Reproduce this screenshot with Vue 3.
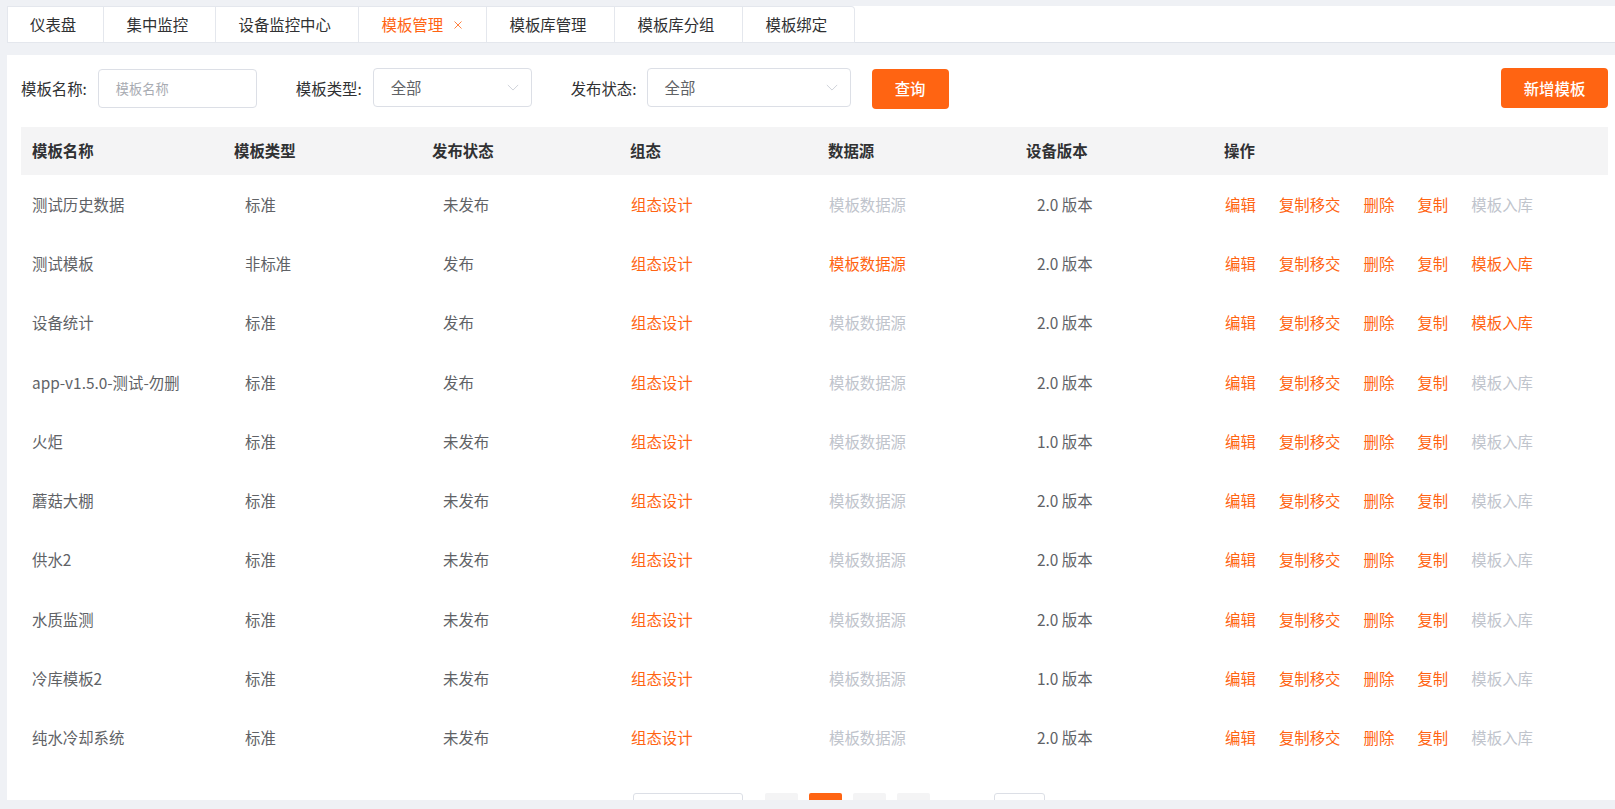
<template>
  <div class="page">
    <div class="tabs">
      <div
        v-for="tab in tabs"
        :key="tab.label"
        class="tab"
        :class="{ active: tab.active }"
        :style="{ width: tab.width + 'px' }"
      >
        <span>{{ tab.label }}</span>
        <svg v-if="tab.active" class="tab-close" viewBox="0 0 10 10" width="10" height="10">
          <path d="M1.5 1.5l7 7M8.5 1.5l-7 7" />
        </svg>
      </div>
    </div>

    <div class="panel">
      <div class="filters">
        <label class="label first">模板名称:</label>
        <div class="input name-input">模板名称</div>
        <label class="label type-label">模板类型:</label>
        <div class="select type-select">
          <span>全部</span>
          <svg class="chevron" viewBox="0 0 14 8" width="12" height="7"><path d="M1 1l6 6 6-6" /></svg>
        </div>
        <label class="label status-label">发布状态:</label>
        <div class="select status-select">
          <span>全部</span>
          <svg class="chevron" viewBox="0 0 14 8" width="12" height="7"><path d="M1 1l6 6 6-6" /></svg>
        </div>
        <button class="btn query">查询</button>
        <button class="btn add">新增模板</button>
      </div>

      <table class="grid">
        <colgroup>
          <col style="width: 202px" />
          <col style="width: 198px" />
          <col style="width: 198px" />
          <col style="width: 198px" />
          <col style="width: 198px" />
          <col style="width: 198px" />
          <col />
        </colgroup>
        <thead>
          <tr>
            <th v-for="h in headers" :key="h">{{ h }}</th>
          </tr>
        </thead>
        <tbody>
          <tr v-for="row in rows" :key="row.name">
            <td class="name">{{ row.name }}</td>
            <td class="plain">{{ row.type }}</td>
            <td class="plain">{{ row.status }}</td>
            <td class="link-cell"><a class="link">组态设计</a></td>
            <td class="link-cell"><a class="link" :class="{ off: !row.source }">模板数据源</a></td>
            <td class="plain">{{ row.version }} 版本</td>
            <td class="ops">
              <a class="link">编辑</a>
              <a class="link">复制移交</a>
              <a class="link">删除</a>
              <a class="link">复制</a>
              <a class="link" :class="{ off: !row.store }">模板入库</a>
            </td>
          </tr>
        </tbody>
      </table>

      <div class="pager">
        <div class="page-size"></div>
        <div class="pages">
          <span class="num"></span>
          <span class="num current"></span>
          <span class="num"></span>
          <span class="num"></span>
        </div>
        <div class="jump"></div>
      </div>
    </div>
  </div>
</template>

<script setup>
const tabs = [
  { label: '仪表盘', width: 97 },
  { label: '集中监控', width: 112 },
  { label: '设备监控中心', width: 143 },
  { label: '模板管理', width: 128, active: true },
  { label: '模板库管理', width: 128 },
  { label: '模板库分组', width: 128 },
  { label: '模板绑定', width: 112 }
];

const headers = ['模板名称', '模板类型', '发布状态', '组态', '数据源', '设备版本', '操作'];

const rows = [
  { name: '测试历史数据', type: '标准', status: '未发布', version: '2.0' },
  { name: '测试模板', type: '非标准', status: '发布', version: '2.0', source: true, store: true },
  { name: '设备统计', type: '标准', status: '发布', version: '2.0', store: true },
  { name: 'app-v1.5.0-测试-勿删', type: '标准', status: '发布', version: '2.0' },
  { name: '火炬', type: '标准', status: '未发布', version: '1.0' },
  { name: '蘑菇大棚', type: '标准', status: '未发布', version: '2.0' },
  { name: '供水2', type: '标准', status: '未发布', version: '2.0' },
  { name: '水质监测', type: '标准', status: '未发布', version: '2.0' },
  { name: '冷库模板2', type: '标准', status: '未发布', version: '1.0' },
  { name: '纯水冷却系统', type: '标准', status: '未发布', version: '2.0' }
];
</script>

<style>
html,
body {
  margin: 0;
  background: #eff1f5;
  overflow: hidden;
}
</style>

<style scoped>
.page {
  width: 1615px;
  height: 809px;
  padding: 6px 0 9px 7px;
  box-sizing: border-box;
  background: #eff1f5;
  font-family: "Noto Sans CJK SC", sans-serif;
  font-size: 15.4px;
  display: flex;
  flex-direction: column;
  overflow: hidden;
}

.tabs {
  display: flex;
  height: 37px;
  box-sizing: border-box;
  background: #fff;
  border-bottom: 1px solid #dfe3ea;
  flex: none;
}

.tab {
  height: 37px;
  box-sizing: border-box;
  display: flex;
  align-items: center;
  gap: 10px;
  padding: 0 0 2px 22.5px;
  color: #303133;
  border: 1px solid #e4e7ed;
  border-left: none;
}

.tab:first-child {
  border-left: 1px solid #e4e7ed;
  padding-left: 22px;
}

.tab:last-child {
  border-top-right-radius: 4px;
}

.tab.active {
  color: #ff6412;
}

.tab-close {
  fill: none;
  stroke: #ff6412;
  stroke-width: 1;
  opacity: 0.8;
  margin-top: 3px;
}

.panel {
  margin-top: 12px;
  flex: 1;
  min-height: 0;
  background: #fff;
  padding: 13px 7px 0 14px;
  overflow: hidden;
}

.filters {
  display: flex;
  align-items: center;
  height: 40px;
}

.label {
  color: #303133;
  line-height: 40px;
  padding-bottom: 1px;
}

.input,
.select {
  box-sizing: border-box;
  height: 39px;
  border: 1px solid #dcdfe6;
  border-radius: 4px;
  display: flex;
  align-items: center;
  background: #fff;
}

.name-input {
  width: 159px;
  margin-left: 11px;
  margin-top: 1px;
  padding-left: 17px;
  font-size: 13.2px;
  color: #a8abb2;
}

.type-label {
  margin-left: 39px;
}

.type-select {
  width: 159px;
  margin-left: 11px;
  margin-top: -1px;
}

.status-label {
  margin-left: 39px;
}

.status-select {
  width: 204px;
  margin-left: 10px;
  margin-top: -1px;
}

.select {
  padding: 0 12px 2px 17px;
  justify-content: space-between;
  color: #606266;
}

.chevron {
  fill: none;
  stroke: #c8ccd4;
  stroke-width: 1;
  margin-top: 1px;
}

.btn {
  border: none;
  border-radius: 4px;
  background: #ff6412;
  color: #fff;
  font-family: inherit;
  font-size: 15.4px;
  font-weight: 500;
  height: 40px;
  padding: 0;
}

.query {
  width: 77px;
  margin-left: 21px;
  margin-top: 2px;
  padding-bottom: 2px;
}

.add {
  width: 107px;
  margin-left: auto;
}

.grid {
  margin-top: 19px;
  width: 1587px;
  table-layout: fixed;
  border-collapse: collapse;
}

.grid th {
  height: 48px;
  box-sizing: border-box;
  padding: 0 0 2px 11px;
  text-align: left;
  background: #f4f4f5;
  color: #303133;
  font-size: 15.4px;
  font-weight: 700;
}

.grid td {
  height: 59.3px;
  box-sizing: border-box;
  padding: 0 0 2px;
  color: #606266;
  white-space: nowrap;
}

.grid td.name {
  padding-left: 11px;
}

.grid td.plain {
  padding-left: 22px;
}

.grid td.link-cell {
  padding-left: 12px;
}

.grid td.ops {
  padding-left: 12px;
}

.link {
  color: #ff6412;
}

.link.off {
  color: #c0c4cc;
}

.ops .link + .link {
  margin-left: 23.1px;
}

.pager {
  display: flex;
  margin-top: 25px;
  padding-left: 612px;
}

.page-size {
  width: 110px;
  height: 30px;
  box-sizing: border-box;
  border: 1px solid #dcdfe6;
  border-radius: 3px;
}

.pages {
  display: flex;
  gap: 11px;
  margin-left: 22px;
}

.num {
  width: 33px;
  height: 30px;
  border-radius: 2px;
  background: #f4f4f5;
}

.num.current {
  background: #ff6412;
}

.jump {
  width: 51px;
  height: 30px;
  box-sizing: border-box;
  margin-left: 64px;
  border: 1px solid #dcdfe6;
  border-radius: 3px;
}
</style>
